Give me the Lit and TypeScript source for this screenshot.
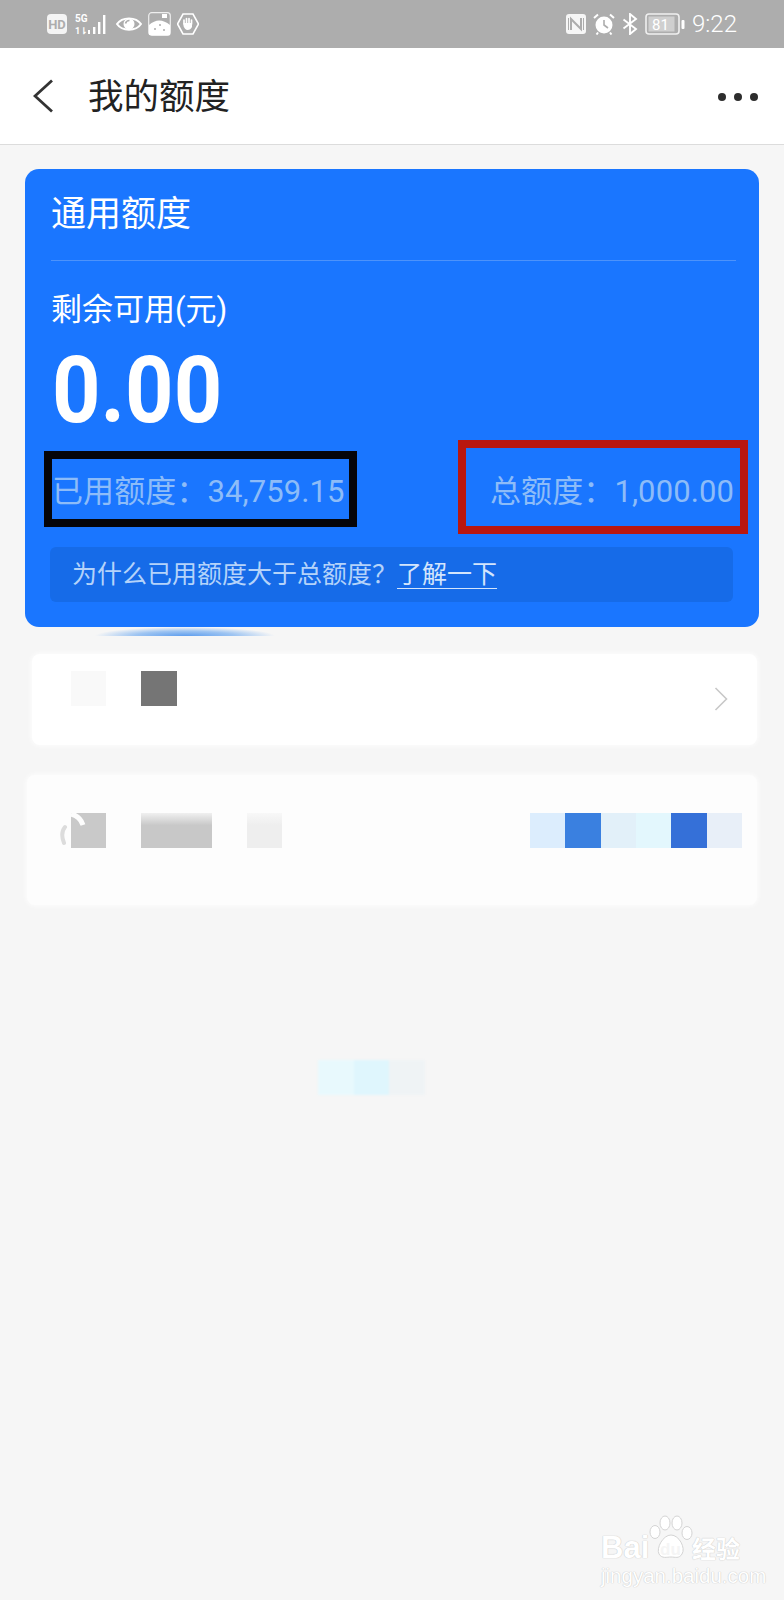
import { LitElement, html, css, svg } from "lit";
import { customElement } from "lit/decorators.js";

type Cell = [number, string];

const mosaic = (cells: Cell[]) => html`<div class="mosaic">
  ${cells.map(([w, c]) => html`<span style="width:${w}px;background:${c}"></span>`)}
</div>`;

const ic = (w: number, h: number, body: unknown) =>
  html`<svg class="ic" width=${w} height=${h} viewBox="0 0 ${w} ${h}">${body}</svg>`;

@customElement("app-root")
export class AppRoot extends LitElement {
  static styles = css`
    :host {
      display: block;
      position: relative;
      width: 784px;
      height: 1600px;
      overflow: hidden;
      background: #f6f6f6;
      font-family: Roboto, "Noto Sans CJK SC", sans-serif;
    }
    .status {
      height: 48px;
      background: #adadad;
      display: flex;
      align-items: center;
      justify-content: space-between;
      padding: 0 47px 0 47px;
      box-sizing: border-box;
      color: #fff;
    }
    .status-group { display: flex; align-items: center; }
    .ic { display: block; flex: none; }
    .time { font-size: 24px; font-weight: 300; margin-left: 7px; line-height: 48px; }
    .header {
      height: 96px;
      background: #fff;
      border-bottom: 1px solid #dcdcdc;
      display: flex;
      align-items: center;
      padding: 0 26px 0 33px;
    }
    .title { font-size: 35.5px; color: #222; margin-left: 35px; flex: 1; line-height: 96px; padding-top: 2px; }
    .dots { display: flex; gap: 8px; margin-top: 2px; }
    .dots i { width: 8px; height: 8px; border-radius: 50%; background: #2d2d2d; }
    .card {
      position: relative;
      margin: 24px 25px 0;
      background: #1a76ff;
      border-radius: 14px;
      padding: 0 23px 25px 26px;
      color: #fff;
    }
    .card-title { font-size: 35px; line-height: 92px; height: 88px; }
    .divider { margin-top: 3px; height: 1px; background: #4d93fb; }
    .label { margin-top: 32px; font-size: 31px; line-height: 34px; height: 34px; }
    .amount {
      margin-top: 24px;
      font-size: 93px;
      line-height: 80px;
      height: 78px;
      font-weight: 700;
      transform: scaleX(0.91);
      transform-origin: left center;
      margin-left: 1px;
    }
    .row {
      margin: 43px 2px 0 1px;
      height: 40px;
      line-height: 40px;
      display: flex;
      justify-content: space-between;
      font-size: 31px;
      letter-spacing: 0.1px;
      color: #8dbcf8;
      white-space: nowrap;
    }
    .tip {
      margin: 35px 3px 0 -1px;
      height: 55px;
      line-height: 55px;
      background: #166be8;
      border-radius: 6px;
      padding-left: 22px;
      font-size: 25px;
      color: #b4d3fa;
    }
    .tip u { color: #d3e5fc; text-underline-offset: 5px; text-decoration-thickness: 1px; }
    .mark { position: absolute; box-sizing: border-box; border: 8px solid; pointer-events: none; }
    .mark.black { left: 19px; top: 282px; width: 313px; height: 76px; border-color: #05050a; }
    .mark.red { left: 433px; top: 271px; width: 290px; height: 94px; border-color: #b9170f; }
    .smear-wrap { height: 27px; overflow: hidden; }
    .smear {
      margin-left: 95px;
      width: 180px;
      height: 9px;
      background: radial-gradient(ellipse 50% 100% at 50% 100%, #5e9eee 0%, rgba(120,175,240,.7) 55%, rgba(245,245,245,0) 100%);
    }
    .item { position: relative; background: #fff; box-shadow: 0 0 5px 1px rgba(255,255,255,.8); border-radius: 8px; }
    .item-a {
      margin: 0 27px 0 32px;
      height: 91px;
      box-sizing: border-box;
      padding: 17px 29px 0 39px;
      display: flex;
      justify-content: space-between;
      align-items: flex-start;
    }
    .chev { margin-top: 16px; }
    .item-b {
      margin: 30px 27px 0 27px;
      height: 130px;
      box-sizing: border-box;
      background: #fdfdfd;
      padding: 38px 15px 0 44px;
      display: flex;
      justify-content: space-between;
      align-items: flex-start;
    }
    .mosaic { display: flex; height: 35px; }
    .mosaic span { display: block; height: 35px; }
    .smudge { position: absolute; left: 31px; top: 38px; }
    .lone { margin: 155px 0 0 318px; filter: blur(1px); }
    .wm {
      position: absolute;
      left: 600px;
      top: 1512px;
      width: 150px;
      height: 76px;
      color: #fff;
      text-shadow: 0 0 1px #c9c9c9, 0 0 1px #c9c9c9;
    }
    .wm span { position: absolute; white-space: nowrap; }
    .wm .bai { left: 1px; top: 21px; font: 700 31px/30px "Liberation Sans", sans-serif; }
    .wm .du { left: 60px; top: 28px; font: 700 17px/20px "Liberation Sans", sans-serif; color: #f5f5f5; text-shadow: none; }
    .wm .jy { left: 92px; top: 26px; font-size: 24px; line-height: 24px; font-weight: 700; }
    .wm .url { left: 1px; top: 52px; font: 400 20.5px/24px "Liberation Sans", sans-serif; }
    .wm svg { position: absolute; left: 49px; top: 3px; }
  `;

  render() {
    const white = "#fff";
    return html`
      <div class="status">
        <div class="status-group">
          ${ic(20, 20, svg`<rect width="20" height="20" rx="4" fill="#f4f4f4"/><text x="10" y="15" text-anchor="middle" font-size="13" font-weight="700" font-family="Roboto" fill="#adadad">HD</text>`)}
          <span style="width:8px"></span>
          ${ic(34, 24, svg`
            <text x="0" y="10" font-size="10" font-weight="700" font-family="Roboto" fill="${white}">5G</text>
            <text x="0" y="22" font-size="9" font-weight="700" font-family="Roboto" fill="${white}">1⇂</text>
            <rect x="13" y="18" width="2" height="4" fill="#fff"/><rect x="18" y="15" width="2.4" height="7" fill="#fff"/>
            <rect x="23" y="10" width="2.4" height="12" fill="#fff"/><rect x="28" y="3" width="2.4" height="19" fill="#fff"/>`)}
          <span style="width:7px"></span>
          ${ic(26, 18, svg`<path d="M1 9C6 1.5 20 1.5 25 9C20 16.5 6 16.5 1 9Z" fill="none" stroke="#fff" stroke-width="2"/><circle cx="13" cy="9" r="5.5" fill="#fff"/><path d="M9.5 8.5a4 4 0 0 1 4-3" stroke="#adadad" stroke-width="1.6" fill="none"/>`)}
          <span style="width:6px"></span>
          ${ic(23, 24, svg`<rect x=".7" y=".7" width="21.6" height="22.6" rx="3" fill="none" stroke="#eee" stroke-width="1.2"/><path d="M1 23V13Q11 4 22 13V23Z" fill="#fff"/><rect x="14" y="2" width="5" height="4" fill="#fff"/><g fill="#adadad"><circle cx="7" cy="17" r="1"/><circle cx="12" cy="13" r="1"/><circle cx="16" cy="18" r="1"/></g>`)}
          <span style="width:6px"></span>
          ${ic(22, 22, svg`<path d="M6 1H16L21.5 11L16 21H6L.5 11Z" fill="none" stroke="#fff" stroke-width="1.6"/><path d="M7 11V7M9.5 11V5.5M12 11V5.5M14.5 11V7" stroke="#fff" stroke-width="1.7" stroke-linecap="round"/><path d="M6.5 10H15V14Q13.5 17 10.5 17Q8 17 6.5 13Z" fill="#fff"/>`)}
        </div>
        <div class="status-group">
          ${ic(20, 20, svg`<rect width="20" height="20" rx="3" fill="#f6f6f6"/><path d="M5 16V5L15 15V4" fill="none" stroke="#adadad" stroke-width="2"/><path d="M2.5 4V16M17.5 4V16" stroke="#adadad" stroke-width="1"/>`)}
          <span style="width:7px"></span>
          ${ic(22, 22, svg`<circle cx="11" cy="12" r="8.5" fill="#fff"/><path d="M11 7V12L15 15" stroke="#adadad" stroke-width="1.6" fill="none"/><path d="M1 5L5 1.5M21 5L17 1.5M5 19.5L3.5 21.5M17 19.5L18.5 21.5" stroke="#fff" stroke-width="2"/>`)}
          <span style="width:7px"></span>
          ${ic(16, 22, svg`<path d="M1.5 6.5L14 16L8 21V1L14 6L1.5 15.5" fill="none" stroke="#fff" stroke-width="1.9"/>`)}
          <span style="width:7px"></span>
          <svg class="ic" width="40" height="22" viewBox="0 0 40 22">
            <rect x="1" y="1" width="33" height="20" rx="3" fill="none" stroke="#efefef" stroke-width="1.6"/>
            <rect x="3.5" y="3.5" width="26" height="15" fill="#cfcfcf"/>
            <rect x="36.5" y="7" width="3" height="9" rx="1" fill="#fff"/>
            <text x="15.5" y="16.5" text-anchor="middle" font-size="15" font-family="Roboto" fill="#fff">81</text>
          </svg>
          <span class="time">9:22</span>
        </div>
      </div>

      <div class="header">
        <svg class="ic" width="20" height="34" viewBox="0 0 20 34"><path d="M19 1.5L2 17L19 32.5" fill="none" stroke="#333" stroke-width="2.8"/></svg>
        <div class="title">我的额度</div>
        <div class="dots"><i></i><i></i><i></i></div>
      </div>

      <section class="card">
        <div class="card-title">通用额度</div>
        <div class="divider"></div>
        <div class="label">剩余可用(元)</div>
        <div class="amount">0.00</div>
        <div class="row">
          <span>已用额度：34,759.15</span>
          <span>总额度：1,000.00</span>
        </div>
        <div class="tip">为什么已用额度大于总额度？<u>了解一下</u></div>
        <div class="mark black"></div>
        <div class="mark red"></div>
      </section>

      <div class="smear-wrap"><div class="smear"></div></div>

      <div class="item item-a">
        ${mosaic([[35, "#f9f9f9"], [35, "#fff"], [36, "#757575"]])}
        <svg class="ic chev" width="14" height="24" viewBox="0 0 14 24"><path d="M1.5 1L12.5 12L1.5 23" fill="none" stroke="#c8c8c8" stroke-width="1.6"/></svg>
      </div>

      <div class="item item-b">
        ${mosaic([[35, "#c9c9c9"], [35, "#fdfdfd"], [71, "linear-gradient(#f0f0f0,#c8c8c8 35%)"], [35, "#fdfdfd"], [35, "linear-gradient(#f8f8f8,#eeeeee 35%)"]])}
        ${mosaic([[35, "#dcedfd"], [36, "#3a80e0"], [35, "#e2f0f9"], [35, "#e3f7fd"], [36, "#3570d8"], [35, "#e8eff8"]])}
        <svg class="smudge" width="40" height="36" viewBox="0 0 40 36"><path d="M7 14Q2 20 6 30" fill="none" stroke="#dcdcdc" stroke-width="4" stroke-linecap="round"/><path d="M13 1Q22 3 25 12" fill="none" stroke="#fdfdfd" stroke-width="5"/></svg>
      </div>

      <div class="lone">${mosaic([[36, "#e8f9fd"], [35, "#dff6fd"], [36, "#eff3f5"]])}</div>

      <div class="wm">
        <svg width="44" height="46" viewBox="0 0 44 46">
          <g fill="#fff" stroke="#d4d4d4" stroke-width="1">
            <ellipse cx="6" cy="17" rx="5" ry="6.5"/><ellipse cx="16" cy="8" rx="5" ry="7"/>
            <ellipse cx="28" cy="8" rx="5" ry="7"/><ellipse cx="38" cy="18" rx="5" ry="6.5"/>
            <path d="M22 20C30 20 37 33 33 39C30 44 26 42 22 42C18 42 13 44 10 39C7 33 14 20 22 20Z"/>
          </g>
        </svg>
        <span class="bai">Bai</span>
        <span class="du">du</span>
        <span class="jy">经验</span>
        <span class="url">jingyan.baidu.com</span>
      </div>
    `;
  }
}
